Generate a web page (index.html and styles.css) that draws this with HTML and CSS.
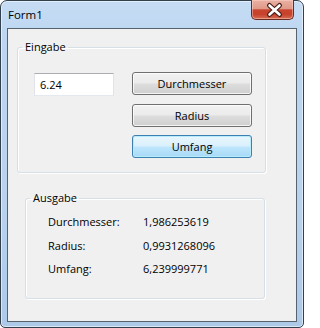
FILE: index.html
```html
<!DOCTYPE html>
<html>
<head>
<meta charset="utf-8">
<title>Form1</title>
<link rel="stylesheet" href="styles.css">
</head>
<body>
<div class="window">
  <div class="titlebar">
    <span class="title">Form1</span>
    <div class="close">
      <svg width="41" height="18" viewBox="0 0 41 18">
        <path d="M17.5 4.5 L27.5 13.5 M27.5 4.5 L17.5 13.5" stroke="#4a1f18" stroke-width="5" stroke-linecap="round" fill="none"/>
        <path d="M17.5 4.5 L27.5 13.5 M27.5 4.5 L17.5 13.5" stroke="#ffffff" stroke-width="2.6" stroke-linecap="round" fill="none"/>
      </svg>
    </div>
  </div>
  <div class="client">
    <fieldset class="group group-in">
      <legend class="legend">Eingabe</legend>
      <div class="in-grid">
        <div class="textbox">6.24</div>
        <div class="btn-col">
          <button class="btn">Durchmesser</button>
          <button class="btn btn-2">Radius</button>
          <button class="btn btn-3 btn-default">Umfang</button>
        </div>
      </div>
    </fieldset>
    <fieldset class="group group-out">
      <legend class="legend">Ausgabe</legend>
      <div class="out-grid">
        <span class="cell">Durchmesser:</span><span class="cell">1,986253619</span>
        <span class="cell">Radius:</span><span class="cell">0,9931268096</span>
        <span class="cell">Umfang:</span><span class="cell">6,239999771</span>
      </div>
    </fieldset>
  </div>
</div>
</body>
</html>
```

FILE: styles.css
```css
html, body {
  margin: 0;
  padding: 0;
  background: #ffffff;
}

body {
  font-family: "Segoe UI", "Open Sans", "Noto Sans", sans-serif;
  font-size: 11px;
  color: #000;
}

.window {
  width: 304px;
  height: 328px;
  box-sizing: border-box;
  border: 1px solid #33404d;
  border-radius: 7px 7px 5px 5px;
  background: linear-gradient(180deg, #c6dcf4 0%, #bcd6f1 12%, #b9d3ef 60%, #adc9e8 100%);
  box-shadow: inset 0 0 0 1px rgba(255, 255, 255, 0.55);
  padding: 0 6px 5px 6px;
  display: flex;
  flex-direction: column;
}

.titlebar {
  height: 27px;
  display: flex;
  justify-content: space-between;
  align-items: flex-start;
  padding-left: 1px;
  margin-right: 3px;
}

.title {
  margin-top: 6px;
  line-height: 16px;
  font-size: 11.5px;
  color: #000;
}

.close {
  width: 43px;
  height: 20px;
  box-sizing: border-box;
  margin-top: -1px;
  border: 1px solid #6b2a20;
  border-top: none;
  border-radius: 0 0 5px 5px;
  background: linear-gradient(180deg, #eab1a4 0%, #e09a89 45%, #c9452f 52%, #c7412a 75%, #d66c53 100%);
  box-shadow: inset 0 0 0 1px rgba(255, 220, 210, 0.45);
  display: flex;
  align-items: center;
  justify-content: center;
}

.close svg {
  display: block;
}

.client {
  flex: 1;
  background: #f0f0f0;
  border: 1px solid #56626e;
  display: flex;
  flex-direction: column;
  align-items: flex-start;
}

.group {
  box-sizing: border-box;
  margin: 0;
  padding: 0;
  border: 1px solid #d5dfe5;
  border-radius: 3px;
  box-shadow: inset 1px 1px 0 #ffffff, 1px 1px 0 #ffffff;
  min-width: 0;
}

.legend {
  line-height: 16px;
  margin-left: 4px;
  padding: 0 2px 0 3px;
  color: #000;
}

.group-in {
  width: 249px;
  margin: 10px 0 0 9px;
}

.in-grid {
  display: grid;
  grid-template-columns: 80px 120px;
  column-gap: 18px;
  align-items: start;
  padding: 17px 0 14px 16px;
}

.textbox {
  box-sizing: border-box;
  height: 23px;
  margin-top: 1px;
  background: #ffffff;
  border: 1px solid #e2e3ea;
  border-top-color: #abadb3;
  border-bottom-color: #e3e9ef;
  padding-left: 5px;
  line-height: 21px;
}

.btn-col {
  display: flex;
  flex-direction: column;
}

.btn {
  box-sizing: border-box;
  width: 120px;
  height: 23px;
  margin: 0;
  padding: 0;
  font-family: inherit;
  font-size: 11px;
  color: #000;
  line-height: 21px;
  border: 1px solid #707070;
  border-radius: 3px;
  background: linear-gradient(180deg, #f2f2f2 0%, #ebebeb 48%, #dddddd 52%, #cfcfcf 100%);
  box-shadow: inset 0 0 0 1px rgba(255, 255, 255, 0.75);
}

.btn-2 {
  margin-top: 9px;
}

.btn-3 {
  margin-top: 8px;
}

.btn-default {
  border-color: #3c7fb1;
  background: linear-gradient(180deg, #eaf6fd 0%, #d9f0fc 48%, #bee6fd 52%, #a7d9f5 100%);
  box-shadow: inset 0 0 0 1px #b6ecfb;
}

.group-out {
  width: 240px;
  margin: 17px 0 0 17px;
}

.out-grid {
  display: grid;
  grid-template-columns: 95px auto;
  grid-template-rows: 24px 24px 22px;
  align-items: center;
  padding: 4px 0 18px 22px;
}

.cell {
  line-height: 16px;
  white-space: nowrap;
}
```
